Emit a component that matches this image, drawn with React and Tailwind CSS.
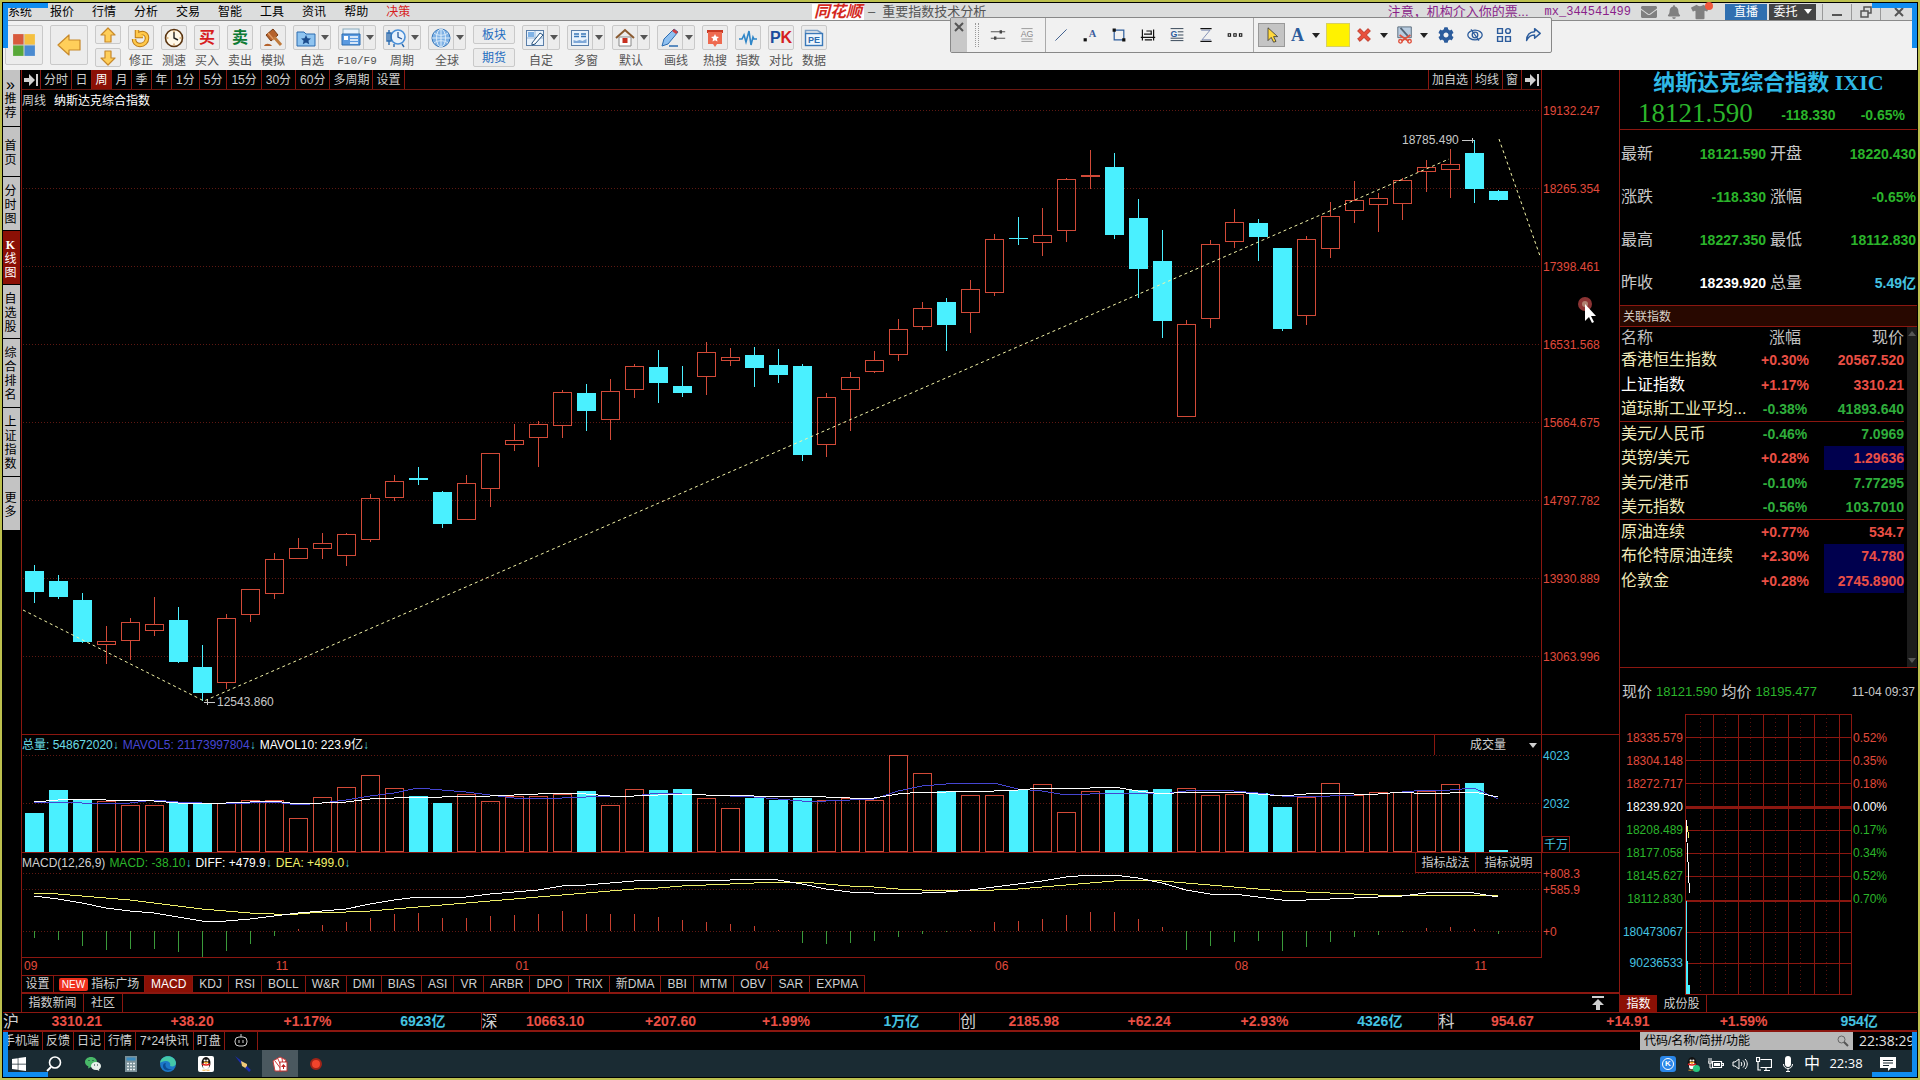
import React from 'react';
import { FaCog, FaTshirt, FaBell, FaEnvelope, FaWindows } from 'react-icons/fa';

// [body top, body bottom, wick top, wick bottom, falling, volume top]
const candles = [
    [571, 592, 565, 603, 1, 813], [581, 597, 575, 599, 1, 790], [600, 642, 593, 643, 1, 800],
    [641, 645, 626, 664, 0, 801], [622, 641, 618, 660, 0, 805], [624, 631, 597, 636, 0, 805],
    [620, 662, 607, 663, 1, 803], [667, 693, 645, 701, 1, 804], [618, 683, 614, 689, 0, 803],
    [589, 615, 589, 622, 0, 800], [559, 594, 553, 599, 0, 800], [548, 559, 538, 559, 0, 818],
    [543, 549, 533, 559, 0, 797], [534, 556, 533, 566, 0, 787], [498, 540, 494, 542, 0, 775],
    [481, 498, 475, 501, 0, 788], [478, 480, 467, 485, 1, 796], [492, 524, 491, 528, 1, 803],
    [483, 520, 475, 520, 0, 794], [453, 489, 453, 507, 0, 801], [440, 445, 424, 451, 0, 796],
    [424, 438, 421, 467, 0, 796], [392, 426, 390, 438, 0, 794], [393, 411, 384, 431, 1, 791],
    [391, 420, 379, 440, 0, 805], [366, 390, 364, 398, 0, 789], [367, 383, 350, 403, 1, 790],
    [386, 393, 366, 397, 1, 789], [352, 377, 342, 395, 0, 798], [357, 361, 348, 366, 0, 808],
    [355, 368, 347, 387, 1, 798], [365, 375, 349, 383, 1, 800], [366, 455, 364, 461, 1, 798],
    [397, 445, 393, 457, 0, 800], [377, 390, 372, 431, 0, 798], [360, 372, 351, 373, 0, 800],
    [329, 355, 319, 361, 0, 755], [308, 327, 302, 330, 0, 773], [302, 325, 298, 351, 1, 791],
    [289, 313, 280, 333, 0, 795], [239, 293, 234, 296, 0, 795], [238, 239, 217, 245, 1, 790],
    [235, 243, 208, 256, 0, 784], [179, 231, 178, 242, 0, 812], [175, 177, 150, 189, 0, 791],
    [167, 235, 153, 239, 1, 790], [218, 269, 199, 298, 1, 790], [261, 321, 230, 338, 1, 789],
    [324, 417, 320, 417, 0, 788], [244, 319, 240, 328, 0, 795], [222, 242, 209, 248, 0, 794],
    [223, 237, 219, 261, 1, 793], [248, 329, 248, 331, 1, 807], [239, 316, 236, 325, 0, 797],
    [216, 249, 202, 258, 0, 783], [200, 211, 181, 223, 0, 795], [198, 205, 193, 232, 0, 792],
    [180, 204, 178, 220, 0, 792], [167, 172, 160, 192, 0, 791], [164, 170, 149, 198, 0, 784],
    [153, 189, 140, 203, 1, 783], [191, 200, 190, 201, 1, 850],
];

const mavol10 = [802, 800, 799, 800, 800, 801, 803, 803, 803, 802, 801, 804, 803, 802, 799, 798, 797, 797, 796, 796, 795, 794, 793, 794, 796, 796, 795, 794, 795, 795, 796, 796, 796, 797, 798, 798, 794, 792, 792, 791, 791, 790, 788, 789, 788, 787, 791, 794, 792, 792, 792, 794, 796, 794, 793, 794, 794, 792, 794, 793, 792, 797];
const mavol5 = [803, 802, 803, 803, 803, 800, 802, 803, 804, 803, 802, 805, 803, 800, 796, 793, 788, 790, 792, 795, 798, 798, 798, 797, 796, 796, 793, 794, 795, 796, 797, 799, 801, 801, 800, 799, 791, 786, 784, 783, 783, 789, 791, 795, 794, 793, 793, 794, 791, 790, 791, 793, 796, 797, 796, 795, 794, 792, 790, 790, 788, 799];
const diff = [896, 899, 903, 908, 911, 913, 917, 921, 921, 919, 916, 913, 911, 909, 904, 900, 897, 898, 897, 894, 892, 890, 886, 885, 883, 881, 880, 880, 880, 880, 879, 880, 884, 889, 892, 893, 894, 893, 892, 890, 887, 884, 881, 877, 875, 875, 878, 883, 890, 894, 894, 897, 900, 900, 899, 898, 897, 896, 893, 892, 893, 897];
const dea = [893, 894, 896, 898, 900, 903, 906, 909, 911, 913, 914, 914, 912, 912, 911, 909, 907, 905, 903, 901, 899, 897, 895, 893, 891, 889, 888, 886, 885, 884, 883, 882, 882, 884, 886, 887, 889, 890, 890, 890, 890, 889, 887, 885, 883, 881, 880, 881, 883, 885, 887, 889, 891, 892, 893, 894, 895, 896, 895, 895, 895, 895];
const macd = [938, 940, 946, 950, 949, 949, 952, 957, 951, 944, 936, 929, 925, 922, 918, 914, 913, 918, 918, 916, 915, 914, 911, 914, 914, 914, 917, 920, 922, 924, 926, 930, 943, 944, 943, 941, 937, 934, 932, 930, 922, 921, 919, 915, 912, 912, 919, 927, 950, 946, 942, 941, 951, 947, 942, 937, 935, 932, 928, 927, 929, 934];

const cx = (i) => 12 + i * 24;
const line = (values) => values.map((y, i) => `${cx(i)},${y}`).join(' ');

const menus = ['系统', '报价', '行情', '分析', '交易', '智能', '工具', '资讯', '帮助'];
const periods = ['分时', '日', '周', '月', '季', '年', '1分', '5分', '15分', '30分', '60分', '多周期', '设置'];
const prices = ['19132.247', '18265.354', '17398.461', '16531.568', '15664.675', '14797.782', '13930.889', '13063.996'];
const indicators = ['MACD', 'KDJ', 'RSI', 'BOLL', 'W&R', 'DMI', 'BIAS', 'ASI', 'VR', 'ARBR', 'DPO', 'TRIX', '新DMA', 'BBI', 'MTM', 'OBV', 'SAR', 'EXPMA'];
const dates = [['09', 252], ['11', 240], ['01', 240], ['04', 240], ['06', 240], ['08', 240], ['11', 67]];

const sideTabs = [
    { label: '推荐', size: 'h-[57px]', more: true },
    { label: '首页', size: 'h-[50px]' },
    { label: '分时图', size: 'h-[54px]' },
    { label: 'K线图', size: 'h-[54px]', active: true },
    { label: '自选股', size: 'h-[54px]' },
    { label: '综合排名', size: 'h-[69px]' },
    { label: '上证指数', size: 'h-[69px]' },
    { label: '更多', size: 'h-[54px]' },
];

const quotes = [
    ['最新', '18121.590', 'text-[#2bb52b]', '开盘', '18220.430', 'text-[#2bb52b]'],
    ['涨跌', '-118.330', 'text-[#2bb52b]', '涨幅', '-0.65%', 'text-[#2bb52b]'],
    ['最高', '18227.350', 'text-[#2bb52b]', '最低', '18112.830', 'text-[#2bb52b]'],
    ['昨收', '18239.920', 'text-white', '总量', '5.49亿', 'text-[#45c3e0]'],
];

const related = [
    ['香港恒生指数', '+0.30%', '20567.520'],
    ['上证指数', '+1.17%', '3310.21'],
    ['道琼斯工业平均...', '-0.38%', '41893.640', 'line'],
    ['美元/人民币', '-0.46%', '7.0969'],
    ['英镑/美元', '+0.28%', '1.29636', 'hot'],
    ['美元/港币', '-0.10%', '7.77295'],
    ['美元指数', '-0.56%', '103.7010', 'line'],
    ['原油连续', '+0.77%', '534.7'],
    ['布伦特原油连续', '+2.30%', '74.780', 'hot'],
    ['伦敦金', '+0.28%', '2745.8900', 'hot'],
];

const minuteLevels = [
    ['18335.579', '0.52%', 'text-[#e04a3c]'],
    ['18304.148', '0.35%', 'text-[#e04a3c]'],
    ['18272.717', '0.18%', 'text-[#e04a3c]'],
    ['18239.920', '0.00%', 'text-white'],
    ['18208.489', '0.17%', 'text-[#2bb52b]'],
    ['18177.058', '0.34%', 'text-[#2bb52b]'],
    ['18145.627', '0.52%', 'text-[#2bb52b]'],
    ['18112.830', '0.70%', 'text-[#2bb52b]'],
];

const tickers = [
    ['沪', '3310.21', '+38.20', '+1.17%', '6923亿'],
    ['深', '10663.10', '+207.60', '+1.99%', '1万亿'],
    ['创', '2185.98', '+62.24', '+2.93%', '4326亿'],
    ['科', '954.67', '+14.91', '+1.59%', '954亿'],
];

const Caret = ({ className }) => (
    <svg viewBox="0 0 8 5" className={`w-2 h-[5px] shrink-0 ${className || ''}`} fill="currentColor">
        <path d="M0 0h8L4 5z" />
    </svg>
);

const Icon = ({ size = 'w-5 h-5', box = '0 0 20 20', children }) => (
    <svg viewBox={box} className={`${size} shrink-0`} fill="none" aria-hidden="true">{children}</svg>
);

const ArrowIcon = ({ d, size, box }) => (
    <Icon size={size} box={box}><path d={d} fill="#ffcf5a" stroke="#c8892a" strokeWidth="1.2" strokeLinejoin="round" /></Icon>
);

const tools = [
    { label: '修正', icon: <><path d="M6 2v6h6M7 7c5-4 9-1 9 3 0 4-3 7-7 7s-6-3-6-6" stroke="#b87a18" strokeWidth="4.500" /><path d="M6 2v6h6M7 7c5-4 9-1 9 3 0 4-3 7-7 7s-6-3-6-6" stroke="#ffc84a" strokeWidth="2.500" /></> },
    { label: '测速', icon: <><circle cx="10" cy="10" r="8.5" fill="#fff8e8" stroke="#5a3410" strokeWidth="1.6" /><path d="M10 4v6l4 2" stroke="#222" strokeWidth="1.4" /><path d="M10 2.500v2M10 15.500v2M2.500 10h2M15.500 10h2" stroke="#c08030" /></> },
    { label: '买入', text: '买', color: 'text-[#d81e1e]' },
    { label: '卖出', text: '卖', color: 'text-[#0d7a34]' },
    { label: '模拟', icon: <><path d="M3 7l7-6 5 6-7 6z" fill="#b5622c" stroke="#7a3c14" /><path d="M5 5l6 7" stroke="#e09860" strokeWidth="1.500" /><path d="M11 9l7 8" stroke="#c07a3c" strokeWidth="3" /><path d="M1 18c1-3 6-3 8 0z" fill="#b5622c" /></> },
    { label: '自选', drop: true, icon: <><path d="M1 4h7l2 2h9v12H1z" fill="#8fc4f0" stroke="#2c6cb0" /><path d="M10 7l1.500 3.200 3.500.3-2.600 2.300.8 3.400-3.200-1.800-3.200 1.800.8-3.400L5 10.500l3.500-.3z" fill="#1c4c8c" /></> },
    { label: 'F10/F9', drop: true, latin: true, icon: <><rect x="2" y="1" width="16" height="6" fill="#e8f2fc" stroke="#8ab" /><path d="M1 6h18v11H1z" fill="#5b9ae0" stroke="#2c6cb0" /><path d="M9 9h8M9 12h8M9 15h8" stroke="#fff" strokeWidth="1.4" /><rect x="3" y="8" width="4" height="4" fill="#fff" /></> },
    { label: '周期', drop: true, icon: <><circle cx="12" cy="9" r="7" fill="#e8f2fc" stroke="#4a90d8" strokeWidth="1.600" /><path d="M12 4v5l4 2" stroke="#2c5c9c" strokeWidth="1.300" /><path d="M3 2v15M1 5h4v8H1zM8 16v3M16 16l2 3" stroke="#2c6cb0" strokeWidth="1.400" /></> },
    { label: '全球', drop: true, icon: <><circle cx="10" cy="10" r="9" fill="#7fb2e6" stroke="#3a78b8" /><path d="M1 10h18M10 1v18M3 5c4 3 10 3 14 0M3 15c4-3 10-3 14 0" stroke="#dcecfa" /><ellipse cx="10" cy="10" rx="4.500" ry="9" stroke="#dcecfa" /></> },
    { pair: ['板块', '期货'] },
    { label: '自定', drop: true, icon: <><rect x="1.500" y="2.500" width="17" height="15" fill="#e8f2fc" stroke="#5a7ea8" /><path d="M10 3v14M2 10h16" stroke="#9ab8d8" /><rect x="3" y="4" width="6" height="5" fill="#7fb2e6" /><path d="M7 15l8-10 3 2-8 9-3 1z" fill="#fff" stroke="#24507c" /></> },
    { label: '多窗', drop: true, icon: <><rect x="1.500" y="2.500" width="17" height="15" fill="#e8f2fc" stroke="#5a7ea8" /><path d="M4 6h5M4 8.500h5M11 6h5M11 8.500h5" stroke="#3a78b8" strokeWidth="1.300" /><path d="M3.500 15v-3l3 1 3-1 3 1 4-2v4z" fill="#7fa8d8" /></> },
    { label: '默认', drop: true, icon: <><path d="M4 9h12v9H4z" fill="#fff" stroke="#888" /><path d="M1 10l9-8 9 8" stroke="#8a5a30" strokeWidth="2" /><rect x="7.500" y="10" width="5" height="5" fill="#c83020" /></> },
    { label: '画线', drop: true, icon: <><path d="M2 18l2-7L14 1l4 3L8 16z" fill="#8fc0f0" stroke="#2c6cb0" /><path d="M14 1l4 3-2 2-4-3z" fill="#d04040" /><path d="M9 18h9" stroke="#2c6cb0" strokeWidth="1.500" /></> },
    { label: '热搜', icon: <><path d="M2 2h16v3H2z" fill="#c83a24" /><path d="M3 4h14v12H12l-2 3-2-3H3z" fill="#ee6a50" /><path d="M10 6l1.200 2.600 2.800.3-2.100 1.900.6 2.800L10 12.200l-2.500 1.400.6-2.800L6 8.900l2.800-.3z" fill="#fff" /></> },
    { label: '指数', icon: <path d="M1 11h3l2-4 2 7 3-11 2 14 2-8 1 2h3" stroke="#2f86c8" strokeWidth="1.600" /> },
    { label: '对比', text: 'PK', color: 'text-[#d42020]' },
    { label: '数据', icon: <><path d="M1.500 5V2.500h12l4 2.500" stroke="#7aa0c8" strokeWidth="1.500" /><rect x="1.500" y="5.500" width="17" height="12" fill="#eef6fd" stroke="#3a78b8" strokeWidth="1.400" /><text x="10" y="15" fontSize="9" fontWeight="700" fill="#2c6cb0" textAnchor="middle">PE</text></> },
];

const btn = 'flex items-center justify-center bg-[#ececec] border border-[#c9c9c9] rounded-xs';

const ToolItem = ({ tool }) => {
    if (tool.pair) {
        return (
            <div className="w-[42px] flex flex-col gap-1">
                {tool.pair.map((name) => (
                    <button key={name} className={`${btn} h-[19px] text-[#1f6dc0]`}>{name}</button>
                ))}
            </div>
        );
    }
    return (
        <div className={`${tool.drop ? 'w-[38px]' : 'w-[26px]'} flex flex-col items-center`}>
            <button aria-label={tool.label} className={`${btn} w-full h-[25px]`}>
                <span className="flex-1 flex justify-center">
                    {tool.text === 'PK' && <span className="text-base leading-4 font-bold text-[#1c4c9c]">P<span className={tool.color}>K</span></span>}
                    {tool.text && tool.text !== 'PK' && <span className={`text-base leading-4 font-bold ${tool.color}`}>{tool.text}</span>}
                    {tool.icon && <Icon>{tool.icon}</Icon>}
                </span>
                {tool.drop && <span className="w-3 h-full flex items-center justify-center border-l border-[#c9c9c9] text-[#555]"><Caret /></span>}
            </button>
            <span className={`mt-[3px] leading-4 whitespace-nowrap text-[#555] ${tool.latin ? "font-['Liberation_Mono',monospace] text-[11px]" : ''}`}>{tool.label}</span>
        </div>
    );
};

const MenuBar = () => (
    <header className="h-[18px] flex items-center bg-[#dcdddd] border-b border-[#8a8a8a] text-black">
        <nav className="basis-[42%] pl-[5px] flex gap-[18px] leading-4">
            {menus.map((m) => <button key={m}>{m}</button>)}
            <button className="text-[#d81e1e]">决策</button>
        </nav>
        <h1 className="flex items-center gap-1 pl-[5px] text-[13px] text-[#555]">
            <span className="px-0.5 leading-4 bg-white text-base font-bold italic text-[#d42a1e]">同花顺</span>
            <span className="whitespace-pre">–  重要指数技术分析</span>
        </h1>
        <div className="ml-auto flex items-center text-[13px] text-[#8a1f8a]">
            <a href="#notice" className="whitespace-nowrap">注意，机构介入你的票...</a>
            <a href="#account" className="ml-4 font-['Liberation_Mono',monospace] text-xs">mx_344541499</a>
            <div className="ml-2.5 flex items-center gap-2.5 text-[#808080]">
                <FaEnvelope className="w-4 h-4" />
                <FaBell className="w-3.5 h-3.5" />
                <span className="relative">
                    <FaTshirt className="w-[18px] h-4" />
                    <span className="absolute -top-0.5 -right-1 w-2 h-2 rounded-full bg-[#f0583c]" />
                </span>
            </div>
            <button className="ml-4 w-[42px] h-4 bg-[#2f6fb0] text-xs text-white">直播</button>
            <button className="ml-0.5 w-[47px] h-4 flex items-center justify-center gap-1.5 bg-[#444] text-xs text-white">委托<Caret /></button>
            <div className="ml-1.5 w-[95px] h-4 flex divide-x divide-[#999] border-l border-[#999] text-[#555]">
                <button aria-label="最小化" className="w-[29px] flex justify-center items-end pb-1"><span className="w-2.5 h-0.5 bg-[#555]" /></button>
                <button aria-label="还原" className="w-[29px] flex justify-center items-center">
                    <Icon size="w-3 h-3" box="0 0 12 12"><path d="M1 5h7v6H1zM4 5V1h7v6H8" stroke="#555" strokeWidth="1.500" /></Icon>
                </button>
                <button aria-label="关闭" className="w-9 flex justify-center items-center">
                    <Icon size="w-2.5 h-2.5" box="0 0 10 10"><path d="M1 1l8 8M9 1l-8 8" stroke="#555" strokeWidth="2" /></Icon>
                </button>
            </div>
        </div>
    </header>
);

const Toolbar = () => (
    <div className="h-[49px] pt-1 pl-0.5 flex gap-[7px] bg-[#f1f1f1]">
        <button aria-label="首页" className={`${btn} w-[38px] h-10`}>
            <Icon size="w-6 h-6" box="0 0 22 22">
                <path d="M1 1h10v10H1z" fill="#d85a3c" /><path d="M11 1h10v10H11z" fill="#f4c040" />
                <path d="M1 11h10v10H1z" fill="#58a838" /><path d="M11 11h10v10H11z" fill="#4a8ad0" />
                <path d="M1 11h20M11 1v20" stroke="#ccc" />
            </Icon>
        </button>
        <button aria-label="后退" className={`${btn} w-[38px] h-10`}>
            <ArrowIcon size="w-6 h-6" box="0 0 24 24" d="M1 12L12 2v5h11v10H12v5z" />
        </button>
        <div className="w-[26px] flex flex-col gap-1">
            <button aria-label="上翻" className={`${btn} h-[19px]`}><ArrowIcon size="w-4 h-4" box="0 0 16 16" d="M8 1l7 7h-4v7H5V8H1z" /></button>
            <button aria-label="下翻" className={`${btn} h-[19px]`}><ArrowIcon size="w-4 h-4" box="0 0 16 16" d="M8 15l7-7h-4V1H5v7H1z" /></button>
        </div>
        {tools.map((tool) => <ToolItem key={tool.label || 'pair'} tool={tool} />)}
    </div>
);

const drawTools = [
    ['线型', <path d="M1 6h18M1 14h18" stroke="#555" strokeWidth="1.300" />, <path d="M12 4h3v4h-3zM5 12h3v4H5z" fill="#444" />],
    ['字体', <path d="M3 2h14M3 15h14M3 18h14" stroke="#888" />, <text x="10" y="13" fontSize="11" fill="#888" textAnchor="middle">AG</text>],
    null,
    ['直线', <path d="M3 17L17 3" stroke="#3c5c8c" strokeWidth="1.200" />],
    ['标注', <path d="M2 14h4v4H2z" fill="#111" />, <text x="13" y="13" fontSize="13" fontWeight="700" fill="#3c5c9c" textAnchor="middle" fontFamily="Liberation Serif">A</text>],
    ['矩形', <path d="M4 4h12v12H4z" stroke="#2c5c9c" strokeWidth="1.500" />, <path d="M2 2h4v4H2zM14 14h4v4h-4z" fill="#111" />],
    ['量度', <path d="M3 3v14M17 3v14M1 13h18M5 9h10M8 5h6v4M6 16h9" stroke="#111" strokeWidth="1.500" />],
    ['黄金分割', <path d="M2 2h16M11 6h7M11 10h7M2 14h16M2 17h16" stroke="#345" strokeWidth="1.200" />, <text x="6" y="12" fontSize="11" fontWeight="700" fill="#2c5c9c" textAnchor="middle">G</text>],
    ['波段', <path d="M3 2h14M3 18h14" stroke="#111" strokeWidth="1.500" />, <path d="M4 4h11L5 16h11" stroke="#6a7aa8" />],
    ['更多画线', <path d="M1.500 8.500h3v3h-3zM8.500 8.500h3v3h-3zM15.500 8.500h3v3h-3z" fill="#f1f1f1" stroke="#111" strokeWidth="1.300" />],
    null,
];

// Floating drawing palette that hangs over the menu and tool bars
const DrawPalette = () => (
    <div className="absolute left-[947px] top-[14px] h-9 w-[602px] flex items-center bg-[#f1f1f1] border border-[#888] rounded-xs">
        <button aria-label="关闭画线" className="w-4 h-full pt-1 flex justify-center bg-[#c8c8c8]">
            <Icon size="w-2.5 h-2.5" box="0 0 10 10"><path d="M1 1l8 8M9 1l-8 8" stroke="#555" strokeWidth="2" /></Icon>
        </button>
        <span className="ml-2 mr-1 w-1 h-6 border-x border-dotted border-[#999]" />
        {drawTools.map((t, i) => t ? (
            <button key={t[0]} aria-label={t[0]} className="w-[29px] flex justify-center"><Icon size="w-4 h-4">{t[1]}{t[2]}</Icon></button>
        ) : <span key={i} className="ml-1 w-px h-full bg-[#aaa]" />)}
        <button aria-label="选择" className="ml-1 w-[27px] h-6 flex items-center justify-center bg-[#c4c4c4] border border-[#999]">
            <Icon size="w-4 h-4"><path d="M5 1v16l4-4 3 6 3-1-3-6h5z" fill="#ffd83c" stroke="#333" /></Icon>
        </button>
        <button aria-label="文字" className="ml-1.5 flex items-center gap-2 text-[#222]">
            <span className="font-['Liberation_Serif',serif] font-bold text-lg leading-5 text-[#2c5c9c]">A</span><Caret className="w-1.5" />
        </button>
        <button aria-label="颜色" className="ml-1.5 w-6 h-6 bg-[#fff200] border border-[#d8d060]" />
        <button aria-label="删除" className="ml-1.5 flex items-center gap-2 text-[#222]">
            <Icon size="w-4 h-4"><path d="M2 5l3-3 5 5 5-5 3 3-5 5 5 5-3 3-5-5-5 5-3-3 5-5z" fill="#e8503c" stroke="#b02818" /></Icon><Caret className="w-1.5" />
        </button>
        <button aria-label="清除" className="ml-2 flex items-center gap-1.5 text-[#222]">
            <Icon size="w-[18px] h-[18px]"><path d="M2 1h15v12H2z" fill="#b8cce0" stroke="#567" /><path d="M5 2l8 9" stroke="#567" strokeWidth="2" /><path d="M4 10l10 7M16 10L6 17" stroke="#e0503c" strokeWidth="2" /><circle cx="5" cy="17" r="2" stroke="#e0503c" strokeWidth="1.500" /><circle cx="15" cy="17" r="2" stroke="#e0503c" strokeWidth="1.500" /></Icon><Caret className="w-1.5" />
        </button>
        <div className="ml-2.5 flex gap-[13px] text-[#2c5c9c]">
            <button aria-label="设置"><FaCog className="w-4 h-4" /></button>
            <button aria-label="显示"><Icon size="w-4 h-4"><ellipse cx="10" cy="10" rx="9" ry="6" stroke="#2c5c9c" strokeWidth="1.600" /><circle cx="10" cy="10" r="3.500" stroke="#2c5c9c" strokeWidth="1.600" /><path d="M5 3l10 14" stroke="#2c5c9c" strokeWidth="1.400" /></Icon></button>
            <button aria-label="面板"><Icon size="w-4 h-4"><path d="M2 2h6v6H2zM12 12h6v6h-6zM2 12h6v6H2z" stroke="#2c5c9c" strokeWidth="1.800" /><circle cx="15" cy="5" r="3" stroke="#2c5c9c" strokeWidth="1.800" /></Icon></button>
            <button aria-label="分享"><Icon size="w-4 h-4"><path d="M12 2l7 6-7 6v-4c-5 0-8 2-10 7 0-7 4-11 10-11z" stroke="#2c5c9c" strokeWidth="1.800" strokeLinejoin="round" /></Icon></button>
        </div>
    </div>
);

const SideTabs = () => (
    <nav className="w-[18px] shrink-0">
        {sideTabs.map((t) => (
            <button
                key={t.label}
                className={`w-[17px] ${t.size} pt-0.5 pr-0.5 flex flex-col items-center justify-center leading-[14px] border-b border-black ${t.active ? 'bg-[#8b1005] text-white' : 'bg-[#c3c3c3] text-black'}`}
            >
                {t.more && <span className="text-base leading-[14px]">»</span>}
                {t.label.split('').map((c) => <span key={c} className={c === 'K' ? "font-['Liberation_Serif',serif] font-bold" : ''}>{c}</span>)}
            </button>
        ))}
    </nav>
);

const SkipIcon = () => (
    <Icon size="w-3.5 h-3" box="0 0 14 12"><path d="M0 4h5V0l6 6-6 6V8H0zM12 0h2v12h-2z" fill="#d0d0d0" /></Icon>
);

const Grid = ({ rows }) => rows.map((y) => (
    <line key={y} x1="1" x2="1519" y1={y + 0.5} y2={y + 0.5} stroke="#5e1812" strokeDasharray="1 2" />
));

const PriceChart = () => (
    <svg viewBox="0 110 1519 624" preserveAspectRatio="none" className="block w-full h-[624px]" shapeRendering="crispEdges" fill="none">
        <Grid rows={[110, 188, 266, 344, 422, 500, 578, 656]} />
        {candles.map(([top, bottom, high, low, down], i) => down ? (
            <g key={i} fill="#4af0ff">
                <rect x={cx(i)} y={high} width="1" height={low - high} />
                <rect x={cx(i) - 9} y={top} width="19" height={bottom - top} />
            </g>
        ) : (
            <g key={i} stroke="#d24a38">
                <path d={`M${cx(i) + 0.5} ${high}V${top}M${cx(i) + 0.5} ${bottom}V${low}`} />
                <rect x={cx(i) - 8.5} y={top + 0.5} width="18" height={bottom - top - 1} />
            </g>
        ))}
        <path d="M1 610L182 701L1427 159M1477 139L1518 256" stroke="#f4f4a8" strokeDasharray="3 3" shapeRendering="auto" />
        <g stroke="#c8c8c8">
            <path d="M182 702.500h11M185 700v5M1440 140.500h12M1450 138v5" />
        </g>
        <g fill="#c8c8c8" fontSize="12" shapeRendering="auto">
            <text x="195" y="706">12543.860</text>
            <text x="1380" y="144">18785.490</text>
        </g>
    </svg>
);

const VolumeChart = () => (
    <svg viewBox="0 755 1519 97" preserveAspectRatio="none" className="block w-full h-[97px]" shapeRendering="crispEdges" fill="none">
        <Grid rows={[755, 803]} />
        {candles.map(([, , , , down, top], i) => down
            ? <rect key={i} x={cx(i) - 9} y={top} width="19" height={852 - top} fill="#4af0ff" />
            : <rect key={i} x={cx(i) - 8.5} y={top + 0.5} width="18" height={851 - top} stroke="#d24a38" />)}
        <polyline points={line(mavol5)} stroke="#4646d2" />
        <polyline points={line(mavol10)} stroke="#fff" />
    </svg>
);

const MacdChart = () => (
    <svg viewBox="0 873 1519 84" preserveAspectRatio="none" className="block w-full h-[84px]" shapeRendering="crispEdges" fill="none">
        <Grid rows={[873, 889, 931]} />
        {macd.map((y, i) => <path key={i} d={`M${cx(i) + 0.5} 931V${y}`} stroke={y > 931 ? '#3a9a3a' : '#c8402f'} />)}
        <polyline points={line(dea)} stroke="#f0f06a" />
        <polyline points={line(diff)} stroke="#fff" />
    </svg>
);

const Down = () => <span className="text-[#4ac8d8]">↓</span>;

const ChartArea = () => (
    <main className="flex-1 min-w-0 flex flex-col border-l border-[#8b1710] text-[#d0d0d0]">
        <div className="flex">
            <div className="flex-1 min-w-0">
                <div className="h-5 flex leading-5 border-b border-[#6a1710]">
                    <button aria-label="展开" className="w-[19px] flex items-center justify-center border-r border-[#8b1710]"><SkipIcon /></button>
                    {periods.map((p) => (
                        <button key={p} className={`${/\d/.test(p) ? 'px-1' : 'px-[3px]'} min-w-5 border-r border-[#8b1710] ${p === '周' ? 'bg-[#8b1005] text-white' : ''}`}>{p}</button>
                    ))}
                    <div className="ml-auto flex border-l border-[#8b1710] divide-x divide-[#8b1710]">
                        <button className="px-[3px]">加自选</button>
                        <button className="px-[3px]">均线</button>
                        <button className="px-[3px]">窗</button>
                        <button aria-label="收起" className="w-[19px] flex items-center justify-center"><SkipIcon /></button>
                    </div>
                </div>
                <div className="h-5 flex gap-2 leading-[22px]"><span>周线</span><span className="text-white">纳斯达克综合指数</span></div>
                <PriceChart />
            </div>
            <ul className="w-[78px] pt-0.5 border-l border-[#8b1710] text-[#e04a3c]">
                {prices.map((p) => <li key={p} className="h-[78px] pl-px flex items-center">{p}</li>)}
            </ul>
        </div>

        <section className="flex border-t border-[#8b1710]">
            <div className="flex-1 min-w-0">
                <div className="h-5 flex gap-1 leading-5">
                    <span className="text-[#6adce6]">总量: 548672020<Down /></span>
                    <span className="text-[#4646d2]">MAVOL5: 21173997804<Down /></span>
                    <span className="text-white">MAVOL10: 223.9亿<Down /></span>
                    <label className="relative ml-auto w-[107px] border-l border-b border-[#8b1710]">
                        <select aria-label="副图指标" className="w-full h-[19px] appearance-none bg-black text-center leading-[19px]" defaultValue="vol">
                            <option value="vol">成交量</option>
                        </select>
                        <span className="absolute right-1 top-2 pointer-events-none"><Caret /></span>
                    </label>
                </div>
                <VolumeChart />
            </div>
            <div className="w-[78px] pt-[13px] flex flex-col items-start border-l border-[#8b1710] leading-4 text-[#45c3e0]">
                <span className="pl-px">4023</span>
                <span className="mt-8 pl-px">2032</span>
                <span className="mt-auto px-px pt-px leading-[14px] border border-b-0 border-[#8b1710]">千万</span>
            </div>
        </section>

        <section className="flex border-t border-[#8b1710]">
            <div className="flex-1 min-w-0 border-b border-[#8b1710]">
                <div className="h-5 flex gap-1 leading-5">
                    <span>MACD(12,26,9)</span>
                    <span className="text-[#2bb52b]">MACD: -38.10<Down /></span>
                    <span className="text-white">DIFF: +479.9<Down /></span>
                    <span className="text-[#f0f06a]">DEA: +499.0<Down /></span>
                    <div className="ml-auto flex divide-x divide-[#8b1710] border-l border-b border-[#8b1710]">
                        <button className="w-[60px]">指标战法</button>
                        <button className="w-[65px]">指标说明</button>
                    </div>
                </div>
                <MacdChart />
            </div>
            <div className="w-[78px] pt-[13px] border-l border-[#8b1710] pl-px flex flex-col leading-4 text-[#e04a3c]">
                <span>+808.3</span>
                <span>+585.9</span>
                <span className="mt-[26px]">+0</span>
            </div>
        </section>

        <div className="h-[17px] pr-[78px] flex leading-[17px] text-[#e04a3c]">
            {dates.map(([d, grow], i) => <span key={i} className="basis-0 pl-0.5" style={{ flexGrow: grow }}>{d}</span>)}
        </div>
        <div className="h-[19px] flex border-b-2 border-[#8b1710]">
            <div className="flex border-t border-[#8b1710] leading-4">
                <button className="w-8 border-r border-[#8b1710]">设置</button>
                <button className="w-[91px] flex items-center justify-center gap-[3px] border-r border-[#8b1710]">
                    <span className="px-[3px] rounded-xs bg-[#f0301c] text-[10px] leading-[13px] text-white">NEW</span>指标广场
                </button>
                {indicators.map((name, i) => (
                    <button key={name} className={`px-1.5 border-r border-[#8b1710] ${i === 0 ? 'bg-[#8b1005] text-white' : ''}`}>{name}</button>
                ))}
            </div>
        </div>
        <div className="h-[18px] flex leading-[18px]">
            <button className="w-[62px] border-r border-[#8b1710]">指数新闻</button>
            <button className="w-[39px] border-r border-[#8b1710]">社区</button>
            <button aria-label="置顶" className="ml-auto mr-3.5 self-center">
                <Icon size="w-3.5 h-3.5" box="0 0 14 14"><path d="M1 0h12v2H1zM7 3l6 6h-4v5H5V9H1z" fill="#d0d0d0" /></Icon>
            </button>
        </div>
    </main>
);

const MinuteChart = () => (
    <svg viewBox="0 0 167 281" preserveAspectRatio="none" className="block flex-1 min-w-0 h-[281px]" shapeRendering="crispEdges" fill="none">
        <path d="M.5 .5H166.500V280.500H.5zM28 0V280M53 0V280M78 0V280M103 0V280M129 0V280M154 0V280" stroke="#8b1710" />
        <path d="M0 23.500H167M0 46.500H167M0 69.500H167M0 116.500H167M0 139.500H167M0 162.500H167M0 218.500H167M0 249.500H167" stroke="#8b1710" />
        <path d="M15.500 0V280M40.500 0V280M65.500 0V280M90.500 0V280M115.500 0V280M141.500 0V280" stroke="#5a120e" strokeDasharray="1 3" />
        <path d="M0 93.500H167" stroke="#8b1710" strokeWidth="3" />
        <path d="M0 187H167" stroke="#8b1710" strokeWidth="2" />
        <path d="M1 106l3 18" stroke="#f0f06a" />
        <path d="M1.500 106v12l1.500 30 1.500 31M1.500 187v93" stroke="#fff" />
        <path d="M1 187h1v60l1 0v24h2v9H1z" fill="#4af0ff" />
    </svg>
);

const QuotePanel = () => (
    <aside className="w-[298px] shrink-0 flex flex-col border-l border-[#8b1710]">
        <h2 className="h-[26px] text-center text-[22px] leading-[26px] font-bold text-[#2fb9e6] font-['Liberation_Serif','Noto_Sans_CJK_SC',serif]">纳斯达克综合指数 IXIC</h2>
        <div className="h-[34px] pt-px pl-[18px] pr-3 flex items-center justify-between border-b border-[#8b1710] font-bold text-sm text-[#2bb52b]">
            <span className="font-['Liberation_Serif',serif] font-normal text-[27px] leading-8">18121.590</span>
            <span className="flex gap-[25px] pt-1"><span>-118.330</span><span>-0.65%</span></span>
        </div>
        <dl className="h-[175px] pt-0.5 grid grid-rows-4 text-base text-[#c8c8c8]">
            {quotes.map(([a, av, ac, b, bv, bc]) => (
                <div key={a} className="flex items-center pl-px pr-px">
                    <dt className="w-8">{a}</dt>
                    <dd className={`w-[113px] text-right text-sm font-bold ${ac}`}>{av}</dd>
                    <dt className="pl-1 w-10">{b}</dt>
                    <dd className={`flex-1 text-right text-sm font-bold ${bc}`}>{bv}</dd>
                </div>
            ))}
        </dl>
        <h3 className="h-[22px] pl-[3px] leading-[22px] border-y border-[#8b1710] bg-[#280800] text-[#d8d0c8]">关联指数</h3>
        <div className="flex-1 flex border-b border-[#8b1710]">
            <div className="flex-1">
                <table className="w-full table-fixed border-collapse text-left text-base leading-5">
                    <colgroup><col /><col className="w-[78px]" /><col className="w-[80px]" /></colgroup>
                    <thead>
                        <tr className="h-[21px] text-[#c0c0c0]">
                            <th className="pl-px font-normal">名称</th>
                            <th className="font-normal text-center">涨幅</th>
                            <th className="font-normal text-right">现价</th>
                        </tr>
                    </thead>
                    <tbody>
                        {related.map(([name, pct, price, mark]) => {
                            const tone = pct[0] === '+' ? 'text-[#ea4f45]' : 'text-[#2fae3c]';
                            return (
                                <tr key={name} className={`h-[24px] even:h-[25px] ${mark === 'line' ? 'border-b border-[#8b1710]' : ''}`}>
                                    <td className={`pl-px whitespace-nowrap ${name === '上证指数' ? 'text-white' : 'text-[#efe9b8]'}`}>{name}</td>
                                    <td className={`text-center text-sm font-bold ${tone}`}>{pct}</td>
                                    <td className={`text-right text-sm font-bold ${tone} ${mark === 'hot' ? 'bg-[#00004e]' : ''}`}>{price}</td>
                                </tr>
                            );
                        })}
                    </tbody>
                </table>
            </div>
            <div className="ml-[3px] w-2.5 py-1 flex flex-col items-center justify-between bg-[#1c1c1c] text-[#555]">
                <Caret className="rotate-180" /><Caret />
            </div>
        </div>
        <div className="h-[46px] pt-px px-0.5 flex items-center gap-1 whitespace-nowrap text-[13px] text-[#2bb52b]">
            <span className="text-[15px] text-[#c8c8c8]">现价</span>18121.590
            <span className="text-[15px] text-[#c8c8c8]">均价</span>18195.477
            <time className="ml-auto text-xs text-[#c8c8c8]">11-04 09:37</time>
        </div>
        <div className="flex">
            <div className="w-[65px] pt-[13px] pr-0.5 text-right">
                {minuteLevels.map(([value, , tone]) => <div key={value} className={`h-[23px] leading-[23px] ${tone}`}>{value}</div>)}
                <div className="pt-1.5 leading-[31px] text-[#45c3e0]"><div>180473067</div><div>90236533</div></div>
            </div>
            <MinuteChart />
            <div className="w-[65px] pt-[13px] pl-px">
                {minuteLevels.map(([value, pct, tone]) => <div key={value} className={`h-[23px] leading-[23px] ${tone}`}>{pct}</div>)}
            </div>
        </div>
        <div className="h-[17px] flex leading-[18px] text-[#d0d0d0]">
            <button className="w-[37px] bg-[#8b1005] text-white">指数</button>
            <button className="w-[50px] border-r border-[#8b1710]">成份股</button>
        </div>
    </aside>
);

const Ticker = () => (
    <div className="h-5 grid grid-cols-4 border-t border-b-2 border-[#8b1710] text-sm leading-[17px]">
        {tickers.map(([name, ...cells]) => (
            <div key={name} className="flex border-r border-[#8b1710] last:border-r-0">
                <span className="w-4 text-base leading-[17px] text-[#d0d0d0]">{name}</span>
                {cells.map((c, i) => (
                    <span key={c} className={`flex-1 text-center font-bold ${i === 3 ? 'text-[#45c3e0]' : 'text-[#ea4f45]'}`}>{c}</span>
                ))}
            </div>
        ))}
    </div>
);

const StatusBar = () => (
    <footer className="h-[18px] flex leading-[18px] text-[#d0d0d0]">
        {['手机端', '反馈', '日记', '行情', '7*24快讯', '盯盘'].map((t) => (
            <button key={t} className={`${/\d/.test(t) ? 'px-1' : 'px-[3px]'} first:pl-0 border-r border-[#8b1710]`}>{t}</button>
        ))}
        <button aria-label="助手" className="w-[33px] flex items-center justify-center border-r border-[#8b1710]">
            <Icon size="w-3.5 h-3.5" box="0 0 14 14"><rect x="1" y="3" width="12" height="9" rx="4" stroke="#d0d0d0" /><path d="M7 0v3M5 6v3M9 6v3" stroke="#d0d0d0" /></Icon>
        </button>
        <label className="ml-auto w-[213px] flex items-center bg-[#b8b8b8]">
            <input type="text" aria-label="搜索" placeholder="代码/名称/简拼/功能" className="flex-1 min-w-0 pl-1 bg-transparent placeholder:text-black" />
            <span className="pr-1"><Icon size="w-3 h-3" box="0 0 12 12"><circle cx="4.500" cy="4.500" r="3.500" stroke="#666" /><path d="M7 7l4 4" stroke="#555" strokeWidth="2" /></Icon></span>
        </label>
        <time className="w-16 pl-1.5 text-sm leading-[18px] font-['Open_Sans',sans-serif] text-[#e0e0e0] overflow-hidden">22:38:29</time>
    </footer>
);

const Penguin = () => (
    <>
        <ellipse cx="9" cy="8" rx="5" ry="7" fill="#111" /><ellipse cx="9" cy="11" rx="3.500" ry="4" fill="#fff" />
        <circle cx="7.500" cy="5" r="1.200" fill="#fff" /><circle cx="10.500" cy="5" r="1.200" fill="#fff" />
        <path d="M6.500 7h5L9 8.500zM5 16h3.500M9.500 16H13" stroke="#f0a020" fill="#f0a020" /><path d="M4.500 9c3 1.500 6 1.500 9 0" stroke="#e02020" strokeWidth="1.800" />
    </>
);

const Taskbar = () => (
    <footer className="h-[27px] flex items-center bg-[#1a2b33] text-white">
        <div className="h-full flex items-center">
            <button aria-label="开始" className="w-8 flex justify-center"><FaWindows className="w-4 h-4" /></button>
            <button aria-label="搜索" className="w-[38px] flex justify-center"><Icon size="w-4 h-4" box="0 0 16 16"><circle cx="9" cy="6.500" r="5.500" stroke="#fff" strokeWidth="1.600" /><path d="M5 11l-4 4" stroke="#fff" strokeWidth="1.800" /></Icon></button>
            <button aria-label="微信" className="w-10 flex justify-center">
                <Icon size="w-4 h-4" box="0 0 16 16">
                    <path d="M6 1c3.500 0 6 2.200 6 5s-2.500 5-6 5l-3 1.500.5-2C1.500 9.500 0 8 0 6c0-2.800 2.500-5 6-5z" fill="#48b868" />
                    <path d="M11 6c3 0 5 1.800 5 4 0 1.500-.8 2.600-2 3.300l.3 1.700-2-1H11c-3 0-5-1.800-5-4s2-4 5-4z" fill="#e8f0ea" />
                    <path d="M3.500 4.500h1M7.500 4.500h1M9 9h1M12 9h1" stroke="#1a2b33" />
                </Icon>
            </button>
            <button aria-label="计算器" className="w-9 flex justify-center"><Icon size="w-3 h-4" box="0 0 12 16"><rect width="12" height="16" fill="#7a9098" /><rect x="1.500" y="1.500" width="9" height="3" fill="#3c8cc0" /><path d="M2 7.500h2M5 7.500h2M8 7.500h2M2 10.500h2M5 10.500h2M8 10.500h2M2 13.500h2M5 13.500h2M8 13.500h2" stroke="#e8eef0" strokeWidth="1.500" /></Icon></button>
            <button aria-label="Edge" className="w-[38px] flex justify-center">
                <Icon size="w-4 h-4" box="0 0 16 16">
                    <circle cx="8" cy="8" r="8" fill="#1c78c8" />
                    <path d="M0 7c1-9 15-9 16 0 0 3-3 4-6 3 1-3-1-5-4-5-3 0-5 1-6 2z" fill="#44c8a8" />
                    <path d="M6 7c-2 3 1 7 6 6-4 3-9 1-9-3 0-2 1-3 3-3z" fill="#0c4c94" />
                </Icon>
            </button>
            <button aria-label="QQ" className="w-[37px] flex justify-center"><span className="w-4 h-4 rounded-xs bg-white flex items-center justify-center"><Icon size="w-4 h-4" box="0 0 18 18"><Penguin /></Icon></span></button>
            <button aria-label="画笔" className="w-[38px] flex justify-center"><Icon size="w-4 h-4" box="0 0 16 16"><path d="M0 0l8 6-2 2z" fill="#1c2cb0" /><path d="M6 5l6 3v5l-5-3z" fill="#f0c878" /><path d="M11 11l4 4" stroke="#1c2cb0" strokeWidth="2.500" /></Icon></button>
            <button aria-label="纸牌" className="w-9 h-full flex items-center justify-center bg-[#4a585f]"><Icon size="w-4 h-4" box="0 0 16 16"><path d="M1 5l7-4 6 3-4 11H3z" fill="#fff" stroke="#d03a3a" /><path d="M3 5l6 8M6 3l4 9M10 2l1 8" stroke="#d03a3a" /><rect x="8" y="6" width="7" height="9" fill="#fff" stroke="#c03030" /><path d="M11.500 8l2.500 3h-2v2h-1v-2H9z" fill="#c02020" /></Icon></button>
            <button aria-label="录制" className="w-9 flex justify-center"><span className="w-3 h-3 rounded-full bg-[#f0442c] border-2 border-[#a02418]" /></button>
        </div>
        <div className="ml-auto pr-[21px] flex items-center gap-2">
            <span className="w-4 h-4 rounded-[3px] bg-[#2a86e8] flex items-center justify-center"><span className="w-3 h-3 rounded-full border border-white text-[8px] leading-[10px] text-center font-bold">K</span></span>
            <Icon size="w-4 h-4" box="0 0 18 18"><Penguin /><circle cx="14" cy="14" r="4" fill="#28c880" /></Icon>
            <Icon size="w-4 h-4" box="0 0 16 16"><path d="M4.500 5.500h9v6h-9zM14 7.500h1.500v2H14" stroke="#fff" strokeWidth="1.200" /><path d="M6 7h6v3H6z" fill="#fff" /><path d="M1 2v2M3 2v2M0 5h4v2H0zM2 7v5h2" stroke="#fff" /></Icon>
            <Icon size="w-4 h-4" box="0 0 16 16"><path d="M1 6h2l4-3v10L3 10H1z" stroke="#fff" /><path d="M9 6c1 1 1 3 0 4M11 4.500c2 2 2 5 0 7M13 3c3 3 3 7 0 10" stroke="#fff" /></Icon>
            <Icon size="w-4 h-4" box="0 0 16 16"><path d="M4.500 3.500h11v8h-11M8 14.500h6M10 12v2M.5 1.500h3v4h-3zM2 6v8h3" stroke="#fff" strokeWidth="1.200" /></Icon>
            <Icon size="w-4 h-4" box="0 0 16 16"><rect x="5" y="0" width="6" height="11" rx="3" fill="#fff" /><path d="M3.500 8c0 6 9 6 9 0M8 13v3M6 15.500h4" stroke="#fff" /></Icon>
            <span className="text-base leading-5">中</span>
            <time className="w-9 text-center text-[13px] font-['Open_Sans',sans-serif]">22:38</time>
            <button aria-label="通知" className="ml-2"><Icon size="w-4 h-4" box="0 0 16 16"><path d="M0 1h16v11h-5l-3 3v-3H0z" fill="#fff" /><path d="M3 4.500h10M3 7h10M3 9.500h6" stroke="#1a2b33" /></Icon></button>
        </div>
    </footer>
);

const App = () => (
    <div className="min-h-screen border-2 border-[#bcc04e] bg-black p-px font-['Liberation_Sans','Noto_Sans_CJK_SC',sans-serif] text-xs">
        <div className="relative flex flex-col">
            <MenuBar />
            <Toolbar />
            <DrawPalette />
            <div className="flex">
                <SideTabs />
                <ChartArea />
                <QuotePanel />
            </div>
            <Ticker />
            <StatusBar />
            <Taskbar />

            <svg viewBox="0 0 20 34" className="absolute right-[320px] top-[293px] w-5 h-[34px]" fill="none">
                <circle cx="8" cy="8" r="7" fill="#8c3434" />
                <circle cx="8" cy="8" r="3" fill="#b08070" />
                <path d="M8 8v17l4-4 3 6 2-1-3-6h5z" fill="#fff" />
            </svg>
            <span className="absolute left-0 top-0 w-[45px] h-[45px] border-l-[5px] border-t-[5px] border-[#0f8cf0] pointer-events-none" />
            <span className="absolute right-0 top-0 w-[45px] h-[45px] border-r-[5px] border-t-[5px] border-[#0f8cf0] pointer-events-none" />
            <span className="absolute left-0 bottom-0 w-[45px] h-[45px] border-l-[5px] border-b-[5px] border-[#0f8cf0] pointer-events-none" />
            <span className="absolute right-0 bottom-0 w-[45px] h-[45px] border-r-[5px] border-b-[5px] border-[#0f8cf0] pointer-events-none" />
        </div>
    </div>
);

export default App;
